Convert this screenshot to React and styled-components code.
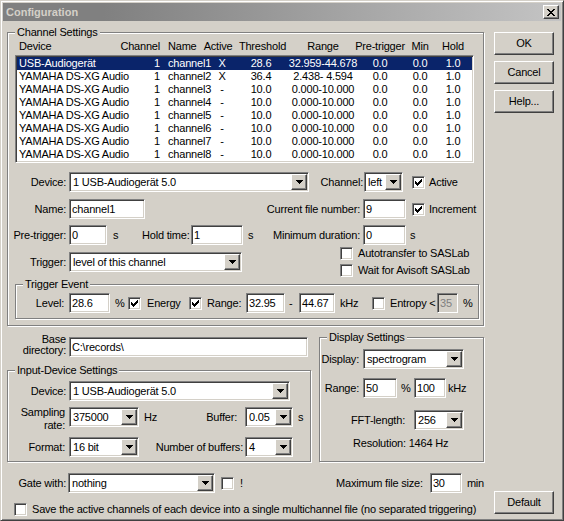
import React from 'react';
import styled, { createGlobalStyle, css } from 'styled-components';

const Global = createGlobalStyle`
  html, body { margin: 0; padding: 0; background: #d4d0c8; }
  body {
    font-family: "Liberation Sans", Arial, sans-serif;
    font-size: 11px;
    letter-spacing: -0.2px;
    line-height: 13px;
    color: #000;
  }
  * { box-sizing: border-box; }
`;

const raised = css`
  border: 1px solid;
  border-color: #fff #404040 #404040 #fff;
  box-shadow: inset -1px -1px 0 #808080, inset 1px 1px 0 #d4d0c8;
  background: #d4d0c8;
`;

const sunken = css`
  border: 1px solid;
  border-color: #808080 #fff #fff #808080;
  box-shadow: inset 1px 1px 0 #404040, inset -1px -1px 0 #d4d0c8;
`;

const Window = styled.div`
  width: 564px;
  height: 521px;
  background: #d4d0c8;
  border: 1px solid;
  border-color: #d4d0c8 #404040 #404040 #d4d0c8;
  box-shadow: inset 1px 1px 0 #fff, inset -1px -1px 0 #808080;
  padding: 2px;
  display: flex;
  flex-direction: column;
`;

const TitleBar = styled.div`
  height: 18px;
  flex: none;
  background: linear-gradient(to right, #808080 0%, #808080 18%, #c4c4c4 100%);
  display: flex;
  align-items: center;
  justify-content: space-between;
  padding: 0 2px 0 3px;
`;

const Title = styled.span`
  font-weight: bold;
  color: #d4d0c8;
  letter-spacing: 0;
`;

const CloseBtn = styled.div`
  ${raised};
  width: 16px;
  height: 14px;
  display: flex;
  align-items: center;
  justify-content: center;
`;

const Client = styled.div`
  flex: 1;
  display: flex;
`;

const Main = styled.div`
  width: 477px;
  margin-left: 4px;
  display: flex;
  flex-direction: column;
`;

const Side = styled.div`
  width: 60px;
  margin-left: 10px;
  padding: 11px 0 4px;
  display: flex;
  flex-direction: column;
  gap: 6px;
`;

const Button = styled.div`
  ${raised};
  height: 23px;
  display: flex;
  align-items: center;
  justify-content: center;
  margin-top: ${(p) => (p.$bottom ? 'auto' : '0')};
`;

const Group = styled.div`
  position: relative;
  border: 1px solid #808080;
  box-shadow: inset 1px 1px 0 #fff, 1px 1px 0 #fff;
  width: ${(p) => (p.$w ? `${p.$w}px` : 'auto')};
  margin: ${(p) => p.$m || '0'};
  padding: ${(p) => p.$p || '0'};
  display: flex;
  flex-direction: column;
`;

const GroupTitle = styled.span`
  position: absolute;
  top: -7px;
  left: 7px;
  padding: 0 2px;
  background: #d4d0c8;
  white-space: nowrap;
`;

const Grid = styled.div`
  display: grid;
  grid-template-columns: 103px 41px 44px 34px 44px 80px 34px 46px 20px;
  height: 13px;
  background: ${(p) => (p.$sel ? '#0a246a' : 'transparent')};
  color: ${(p) => (p.$sel ? '#fff' : '#000')};
  margin-left: ${(p) => p.$ml || 0}px;
  margin-top: ${(p) => p.$mt || 0}px;
`;

const Cell = styled.div`
  display: flex;
  justify-content: ${(p) => p.$j || 'flex-start'};
  white-space: nowrap;
  padding-left: ${(p) => p.$pl || 0}px;
  padding-right: ${(p) => p.$pr || 0}px;
`;

const ListBox = styled.div`
  ${sunken};
  background: #fff;
  width: 459px;
  height: 108px;
  margin: 2px 0 0 7px;
  padding: 1px;
`;

const Row = styled.div`
  display: flex;
  align-items: ${(p) => p.$align || 'center'};
  height: ${(p) => (p.$h ? `${p.$h}px` : 'auto')};
  margin-top: ${(p) => p.$mt || 0}px;
  margin-left: ${(p) => p.$ml || 0}px;
  flex: none;
`;

const Label = styled.span`
  flex: none;
  width: ${(p) => (p.$w ? `${p.$w}px` : 'auto')};
  margin-right: ${(p) => p.$mr || 0}px;
  margin-left: ${(p) => (p.$auto ? 'auto' : `${p.$ml || 0}px`)};
  text-align: right;
  white-space: nowrap;
  line-height: ${(p) => p.$lh || 13}px;
`;

const Unit = styled.span`
  flex: none;
  width: ${(p) => (p.$w ? `${p.$w}px` : 'auto')};
  padding-left: ${(p) => p.$pl || 0}px;
  white-space: nowrap;
`;

const Field = styled.div`
  ${sunken};
  flex: none;
  width: ${(p) => p.$w}px;
  height: 20px;
  margin-top: ${(p) => p.$mt || 0}px;
  background: ${(p) => (p.$disabled ? '#d4d0c8' : '#fff')};
  color: ${(p) => (p.$disabled ? '#808080' : '#000')};
  padding: 0 2px;
  line-height: 18px;
  white-space: nowrap;
  overflow: hidden;
`;

const ComboBox = styled.div`
  ${sunken};
  flex: none;
  width: ${(p) => p.$w}px;
  height: 20px;
  background: #fff;
  padding: 1px;
  display: flex;
`;

const ComboText = styled.span`
  flex: 1;
  padding-left: 2px;
  line-height: 16px;
  white-space: nowrap;
  overflow: hidden;
`;

const DropBtn = styled.div`
  ${raised};
  width: 16px;
  height: 16px;
  flex: none;
  display: flex;
  align-items: center;
  justify-content: center;
`;

const Box = styled.div`
  ${sunken};
  flex: none;
  width: 13px;
  height: 13px;
  background: #fff;
  display: flex;
  align-items: center;
  justify-content: center;
  margin-left: ${(p) => p.$ml || 0}px;
`;

const CheckItem = styled.div`
  display: flex;
  align-items: center;
  flex: none;
  width: ${(p) => (p.$w ? `${p.$w}px` : 'auto')};
  height: ${(p) => (p.$h ? `${p.$h}px` : 'auto')};
  margin-left: ${(p) => p.$ml || 0}px;
`;

const CheckText = styled.span`
  margin-left: ${(p) => p.$gap || 5}px;
  white-space: nowrap;
`;

const CheckColumn = styled.div`
  display: flex;
  flex-direction: column;
  margin-left: ${(p) => p.$ml || 0}px;
`;

const Lower = styled.div`
  display: flex;
  height: 128px;
  margin-top: 8px;
  flex: none;
`;

const LeftCol = styled.div`
  width: 304px;
  display: flex;
  flex-direction: column;
`;

const Plain = styled.div`
  margin-left: ${(p) => p.$ml || 0}px;
  margin-top: ${(p) => p.$mt || 0}px;
  white-space: nowrap;
`;

const Arrow = () => (
  <svg width="7" height="4" shapeRendering="crispEdges">
    <rect x="0" y="0" width="7" height="1" fill="#000" />
    <rect x="1" y="1" width="5" height="1" fill="#000" />
    <rect x="2" y="2" width="3" height="1" fill="#000" />
    <rect x="3" y="3" width="1" height="1" fill="#000" />
  </svg>
);

const CheckMark = () => (
  <svg width="7" height="7" shapeRendering="crispEdges">
    <rect x="6" y="0" width="1" height="1" fill="#000" />
    <rect x="5" y="1" width="2" height="1" fill="#000" />
    <rect x="0" y="2" width="1" height="1" fill="#000" />
    <rect x="4" y="2" width="3" height="1" fill="#000" />
    <rect x="0" y="3" width="2" height="1" fill="#000" />
    <rect x="3" y="3" width="3" height="1" fill="#000" />
    <rect x="0" y="4" width="5" height="1" fill="#000" />
    <rect x="1" y="5" width="3" height="1" fill="#000" />
    <rect x="2" y="6" width="1" height="1" fill="#000" />
  </svg>
);

const CloseGlyph = () => (
  <svg width="8" height="7" shapeRendering="crispEdges">
    {[
      [0, 2, 6, 2],
      [1, 2, 5, 2],
      [2, 4, -1, 0],
      [3, 2, -1, 0],
      [2, 4, -1, 0],
      [1, 2, 5, 2],
      [0, 2, 6, 2],
    ].map(([a, aw, b, bw], i) => (
      <g key={i}>
        <rect x={a} y={i} width={aw} height="1" fill="#000" />
        {b >= 0 && <rect x={b} y={i} width={bw} height="1" fill="#000" />}
      </g>
    ))}
  </svg>
);

const Combo = ({ w, value }) => (
  <ComboBox $w={w}>
    <ComboText>{value}</ComboText>
    <DropBtn>
      <Arrow />
    </DropBtn>
  </ComboBox>
);

const Check = ({ checked, ml }) => (
  <Box $ml={ml}>{checked && <CheckMark />}</Box>
);

const Labeled = ({ checked, text, w, h, ml, gap }) => (
  <CheckItem $w={w} $h={h} $ml={ml}>
    <Check checked={checked} />
    <CheckText $gap={gap}>{text}</CheckText>
  </CheckItem>
);

const rows = [
  ['USB-Audiogerät', '1', 'channel1', 'X', '28.6', '32.959-44.678'],
  ['YAMAHA DS-XG Audio', '1', 'channel2', 'X', '36.4', '2.438- 4.594'],
  ['YAMAHA DS-XG Audio', '1', 'channel3', '-', '10.0', '0.000-10.000'],
  ['YAMAHA DS-XG Audio', '1', 'channel4', '-', '10.0', '0.000-10.000'],
  ['YAMAHA DS-XG Audio', '1', 'channel5', '-', '10.0', '0.000-10.000'],
  ['YAMAHA DS-XG Audio', '1', 'channel6', '-', '10.0', '0.000-10.000'],
  ['YAMAHA DS-XG Audio', '1', 'channel7', '-', '10.0', '0.000-10.000'],
  ['YAMAHA DS-XG Audio', '1', 'channel8', '-', '10.0', '0.000-10.000'],
];

const Columns = ({ cells, sel, ml, mt, header }) => (
  <Grid $sel={sel} $ml={ml} $mt={mt}>
    <Cell $pl={2}>{cells[0]}</Cell>
    <Cell $j="flex-end" $pr={1}>{cells[1]}</Cell>
    <Cell $pl={7}>{cells[2]}</Cell>
    <Cell $j="center" $pr={header ? 8 : 0}>{cells[3]}</Cell>
    <Cell $j="center" $pl={header ? 3 : 0}>{cells[4]}</Cell>
    <Cell $j="center">{cells[5]}</Cell>
    <Cell $j="center">{cells[6]}</Cell>
    <Cell $j="center">{cells[7]}</Cell>
    <Cell $j="center">{cells[8]}</Cell>
  </Grid>
);

export default function App() {
  return (
    <>
      <Global />
      <Window>
        <TitleBar>
          <Title>Configuration</Title>
          <CloseBtn>
            <CloseGlyph />
          </CloseBtn>
        </TitleBar>
        <Client>
          <Main>
            <Group $m="11px 0 0 0" $p="7px 0 6px 0">
              <GroupTitle>Channel Settings</GroupTitle>
              <Columns
                header
                ml={9}
                cells={['Device', 'Channel', 'Name', 'Active', 'Threshold', 'Range', 'Pre-trigger', 'Min', 'Hold']}
              />
              <ListBox>
                {rows.map((r, i) => (
                  <Columns key={i} sel={i === 0} cells={[...r, '0.0', '0.0', '1.0']} />
                ))}
              </ListBox>

              <Row $mt={9} $h={20}>
                <Label $w={58} $mr={3}>Device:</Label>
                <Combo w={240} value="1 USB-Audiogerät 5.0" />
                <Label $w={54} $mr={1}>Channel:</Label>
                <Combo w={39} value="left" />
                <Labeled checked ml={9} gap={4} text="Active" />
              </Row>

              <Row $mt={7} $h={20}>
                <Label $w={58} $mr={3}>Name:</Label>
                <Field $w={76}>channel1</Field>
                <Label $w={215} $mr={3}>Current file number:</Label>
                <Field $w={43}>9</Field>
                <Labeled checked ml={6} gap={4} text="Increment" />
              </Row>

              <Row $mt={6} $h={20}>
                <Label $w={58} $mr={3}>Pre-trigger:</Label>
                <Field $w={38}>0</Field>
                <Unit $w={35} $pl={6}>s</Unit>
                <Label $w={46} $mr={3}>Hold time:</Label>
                <Field $w={52}>1</Field>
                <Unit $w={25} $pl={5}>s</Unit>
                <Label $w={92} $mr={3}>Minimum duration:</Label>
                <Field $w={43}>0</Field>
                <Unit $pl={4}>s</Unit>
              </Row>

              <Row $h={34} $align="flex-start">
                <Row $mt={7} $h={20}>
                  <Label $w={58} $mr={3}>Trigger:</Label>
                  <Combo w={173} value="level of this channel" />
                </Row>
                <CheckColumn $ml={98}>
                  <Labeled h={17} text="Autotransfer to SASLab" />
                  <Labeled h={17} text="Wait for Avisoft SASLab" />
                </CheckColumn>
              </Row>

              <Group $w={464} $m="5px 0 0 7px" $p="8px 0 5px 0">
                <GroupTitle>Trigger Event</GroupTitle>
                <Row $h={20}>
                  <Label $w={48} $mr={5}>Level:</Label>
                  <Field $w={41}>28.6</Field>
                  <Unit $w={18} $pl={5}>%</Unit>
                  <Labeled checked w={61} gap={6} text="Energy" />
                  <Labeled checked w={57} gap={5} text="Range:" />
                  <Field $w={39}>32.95</Field>
                  <Unit $w={14} $pl={4}>-</Unit>
                  <Field $w={36}>44.67</Field>
                  <Unit $w={37} $pl={5}>kHz</Unit>
                  <Labeled w={65} gap={5} text="Entropy <" />
                  <Field $w={21} $disabled>35</Field>
                  <Unit $pl={5}>%</Unit>
                </Row>
              </Group>
            </Group>

            <Lower>
              <LeftCol>
                <Row $h={23} $align="flex-start">
                  <Label $w={59} $mr={3} $lh={11}>
                    Base
                    <br />
                    directory:
                  </Label>
                  <Field $w={239} $mt={3}>C:\records\</Field>
                </Row>
                <Group $m="13px 0 0 0" $p="10px 0 4px 0">
                  <GroupTitle>Input-Device Settings</GroupTitle>
                  <Row $h={20}>
                    <Label $w={58} $mr={3}>Device:</Label>
                    <Combo w={221} value="1 USB-Audiogerät 5.0" />
                  </Row>
                  <Row $mt={5} $h={26} $align="flex-start">
                    <Label $w={57} $mr={4}>
                      Sampling
                      <br />
                      rate:
                    </Label>
                    <Row $mt={1} $h={20}>
                      <Combo w={70} value="375000" />
                      <Unit $w={25} $pl={5}>Hz</Unit>
                      <Label $w={73} $mr={8}>Buffer:</Label>
                      <Combo w={48} value="0.05" />
                      <Unit $pl={5}>s</Unit>
                    </Row>
                  </Row>
                  <Row $mt={5} $h={20}>
                    <Label $w={57} $mr={4}>Format:</Label>
                    <Combo w={70} value="16 bit" />
                    <Label $w={104} $mr={2}>Number of buffers:</Label>
                    <Combo w={48} value="4" />
                  </Row>
                </Group>
              </LeftCol>

              <Group $w={165} $m="3px 0 0 8px" $p="11px 0 0 0">
                <GroupTitle>Display Settings</GroupTitle>
                <Row $h={20}>
                  <Label $w={39} $mr={4}>Display:</Label>
                  <Combo w={101} value="spectrogram" />
                </Row>
                <Row $mt={9} $h={20}>
                  <Label $w={39} $mr={4}>Range:</Label>
                  <Field $w={34}>50</Field>
                  <Unit $w={17} $pl={4}>%</Unit>
                  <Field $w={32}>100</Field>
                  <Unit $pl={2}>kHz</Unit>
                </Row>
                <Row $mt={12} $h={20}>
                  <Label $w={85} $mr={9}>FFT-length:</Label>
                  <Combo w={50} value="256" />
                </Row>
                <Plain $ml={33} $mt={7}>Resolution: 1464 Hz</Plain>
              </Group>
            </Lower>

            <Row $mt={11} $h={20}>
              <Label $w={59} $mr={2}>Gate with:</Label>
              <Combo w={147} value="nothing" />
              <Check ml={6} />
              <Unit $pl={6}>!</Unit>
              <Label $auto $mr={7}>Maximum file size:</Label>
              <Field $w={32}>30</Field>
              <Unit $pl={5}>min</Unit>
            </Row>

            <Row $mt={10} $h={13}>
              <Labeled
                ml={7}
                gap={5}
                text="Save the active channels of each device into a single multichannel file (no separated triggering)"
              />
            </Row>
          </Main>

          <Side>
            <Button>OK</Button>
            <Button>Cancel</Button>
            <Button>Help...</Button>
            <Button $bottom>Default</Button>
          </Side>
        </Client>
      </Window>
    </>
  );
}
